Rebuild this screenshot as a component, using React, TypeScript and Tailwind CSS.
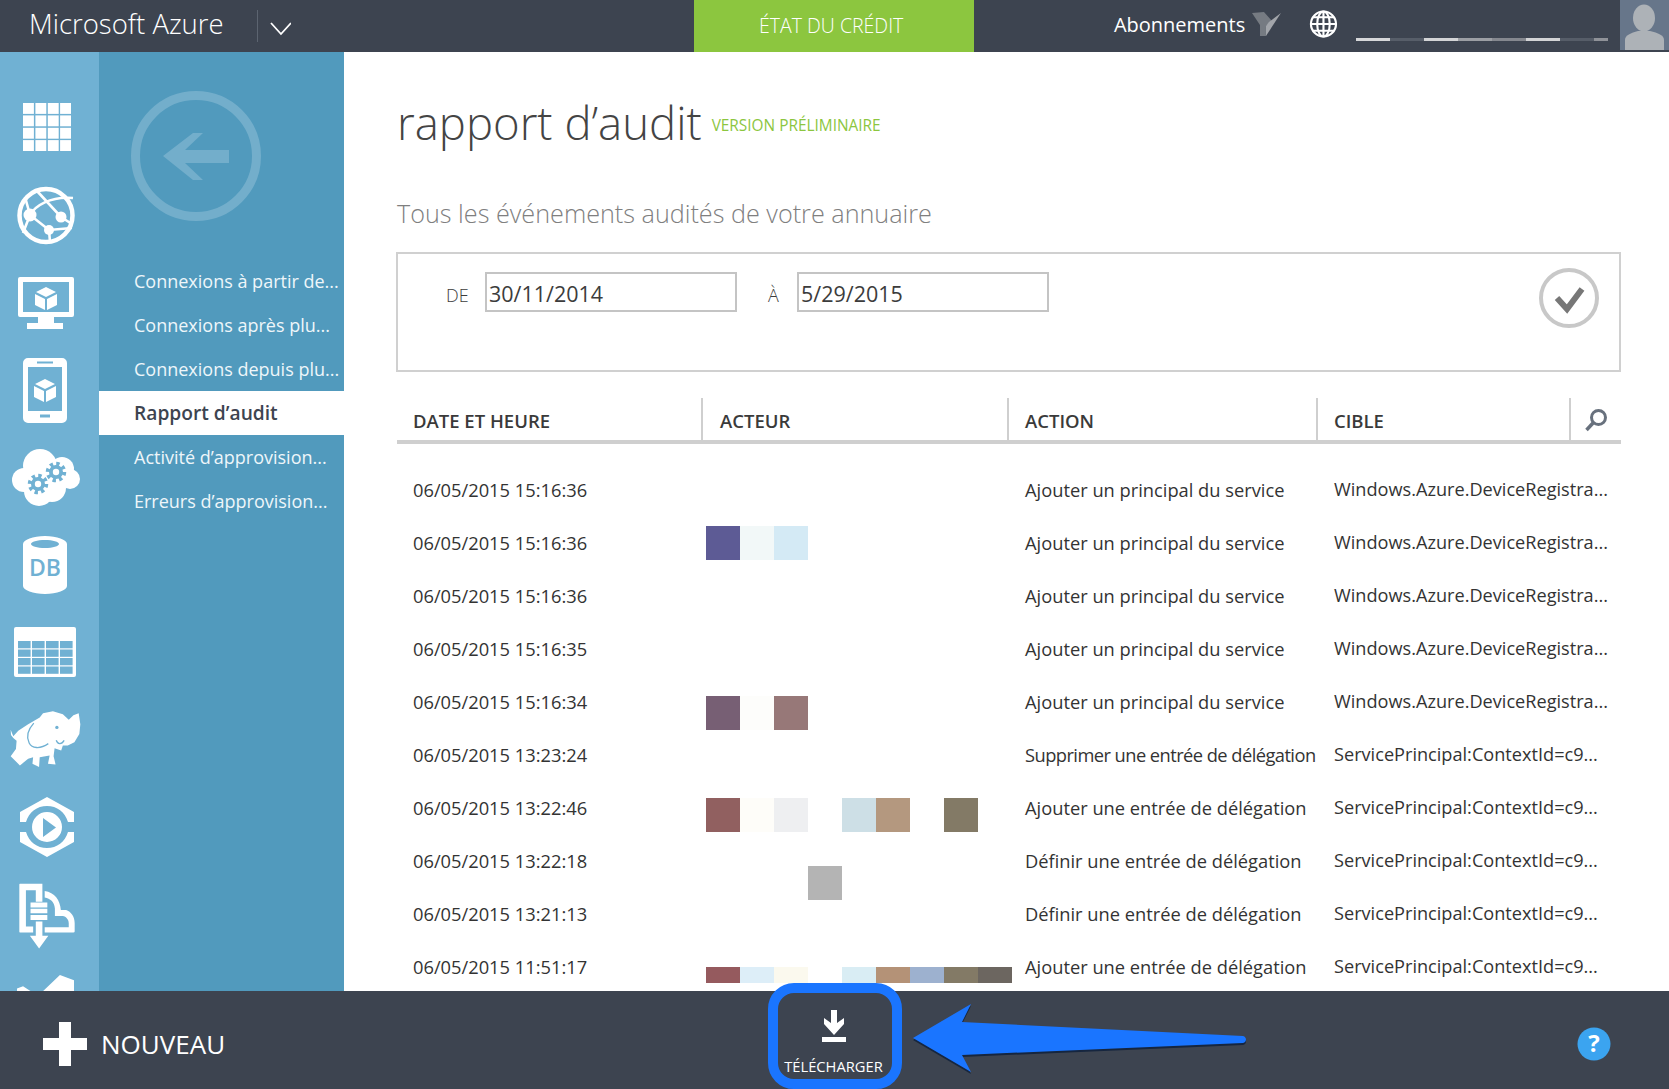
const font = 'font-["Open_Sans","Noto_Sans",sans-serif]';

const menu = [
  'Connexions à partir de...',
  'Connexions après plu...',
  'Connexions depuis plu...',
  'Rapport d’audit',
  'Activité d’approvision...',
  'Erreurs d’approvision...',
];

const addSp = 'Ajouter un principal du service';
const winAzure = 'Windows.Azure.DeviceRegistra...';
const spCtx = 'ServicePrincipal:ContextId=c9...';

type Row = { date: string; action: string; target: string; actionClass?: string; swatches?: React.ReactNode };

const rows: Row[] = [
  { date: '06/05/2015 15:16:36', action: addSp, target: winAzure },
  {
    date: '06/05/2015 15:16:36',
    action: addSp,
    target: winAzure,
    swatches: (
      <div className="flex h-[34px] mt-[10px] w-[300px]">
        <div className="w-[34px] bg-[#5d5b95]" />
        <div className="w-[34px] bg-[#f2f8f8]" />
        <div className="w-[34px] bg-[#d4eaf5]" />
      </div>
    ),
  },
  { date: '06/05/2015 15:16:36', action: addSp, target: winAzure },
  { date: '06/05/2015 15:16:35', action: addSp, target: winAzure },
  {
    date: '06/05/2015 15:16:34',
    action: addSp,
    target: winAzure,
    swatches: (
      <div className="flex h-[34px] mt-[21px] w-[300px]">
        <div className="w-[34px] bg-[#775f74]" />
        <div className="w-[34px] bg-[#fdfdfb]" />
        <div className="w-[34px] bg-[#977878]" />
      </div>
    ),
  },
  {
    date: '06/05/2015 13:23:24',
    action: 'Supprimer une entrée de délégation',
    target: spCtx,
    actionClass: 'tracking-[-0.55px]',
  },
  {
    date: '06/05/2015 13:22:46',
    action: 'Ajouter une entrée de délégation',
    target: spCtx,
    swatches: (
      <div className="flex h-[34px] mt-[17px] w-[300px]">
        <div className="w-[34px] bg-[#916060]" />
        <div className="w-[34px] bg-[#fefdf9]" />
        <div className="w-[34px] bg-[#eeeff1]" />
        <div className="w-[34px]" />
        <div className="w-[34px] bg-[#cddfe6]" />
        <div className="w-[34px] bg-[#b4987f]" />
        <div className="w-[34px]" />
        <div className="w-[34px] bg-[#837a66]" />
      </div>
    ),
  },
  {
    date: '06/05/2015 13:22:18',
    action: 'Définir une entrée de délégation',
    target: spCtx,
    swatches: (
      <div className="flex h-[34px] mt-[32px] w-[300px]">
        <div className="w-[102px]" />
        <div className="w-[34px] bg-[#b4b4b4]" />
      </div>
    ),
  },
  { date: '06/05/2015 13:21:13', action: 'Définir une entrée de délégation', target: spCtx },
  {
    date: '06/05/2015 11:51:17',
    action: 'Ajouter une entrée de délégation',
    target: spCtx,
    swatches: (
      <div className="flex h-[16px] mt-[27px] w-[306px]">
        <div className="w-[34px] bg-[#955a5e]" />
        <div className="w-[34px] bg-[#ddeef8]" />
        <div className="w-[34px] bg-[#fbf9ee]" />
        <div className="w-[34px]" />
        <div className="w-[34px] bg-[#d9edf4]" />
        <div className="w-[34px] bg-[#b49277]" />
        <div className="w-[34px] bg-[#9db1cf]" />
        <div className="w-[34px] bg-[#837a66]" />
        <div className="w-[34px] bg-[#6c6660]" />
      </div>
    ),
  },
];

function Gear({ cx, cy }: { cx: number; cy: number }) {
  return (
    <>
      <circle cx={cx} cy={cy} r="8" fill="none" stroke="#70b1d3" strokeWidth="4.500" strokeDasharray="3.200 3.080" />
      <circle cx={cx} cy={cy} r="7" fill="#70b1d3" />
      <circle cx={cx} cy={cy} r="3.200" fill="#fff" />
    </>
  );
}

function RailIcons() {
  const gridPos = [0, 12.4, 24.8, 37.1];
  const tableX = [4, 18, 32, 46];
  const tableY = [14, 22.5, 31, 39.5];
  return (
    <div className="flex flex-col text-white">
      <svg className="ml-[23px] mt-[51px] w-[48px] h-[48px]" viewBox="0 0 48 48" fill="currentColor">
        {gridPos.map((y) =>
          gridPos.map((x) => <rect key={`${x}-${y}`} x={x} y={y} width="10.9" height="10.9" />),
        )}
      </svg>
      <svg className="ml-[16px] mt-[35px] w-[60px] h-[59px]" viewBox="0 0 60 59" fill="none" stroke="currentColor">
        <circle cx="30" cy="29.5" r="26.500" strokeWidth="4.500" />
        <path d="M14 29C19 20 34 10 57 12M21 5L45 31 56 38M14 29L33 44 56 42M9 11L14 29 7 47M33 44L34 56" strokeWidth="2.600" />
        <circle cx="14" cy="29" r="6.500" fill="currentColor" stroke="none" />
        <circle cx="45" cy="31" r="5.500" fill="currentColor" stroke="none" />
        <circle cx="33" cy="44" r="5" fill="currentColor" stroke="none" />
      </svg>
      <svg className="ml-[18px] mt-[32px] w-[56px] h-[53px]" viewBox="0 0 56 53" fill="currentColor">
        <path fillRule="evenodd" d="M2 0h52a2 2 0 0 1 2 2v36a2 2 0 0 1-2 2H36v6h9v6H9v-6h11v-6H2a2 2 0 0 1-2-2V2a2 2 0 0 1 2-2zm3 5v30h46V5z" />
        <path d="M28 10l10 5-10 5-10-5zM17 17l10 5v11l-10-5zM39 17v11l-10 5V22z" />
      </svg>
      <svg className="ml-[23px] mt-[28px] w-[44px] h-[65px]" viewBox="0 0 44 65" fill="currentColor">
        <path fillRule="evenodd" d="M5 0h34a5 5 0 0 1 5 5v55a5 5 0 0 1-5 5H5a5 5 0 0 1-5-5V5a5 5 0 0 1 5-5zm0 9v44h34V9zM14 3.500v2h16v-2zM17 56.500v3h10v-3z" />
        <path d="M22 21l10 5-10 5-10-5zM11 28l10 5v11l-10-5zM33 28v11l-10 5V33z" />
      </svg>
      <svg className="ml-[12px] mt-[26px] w-[68px] h-[57px]" viewBox="0 0 68 57" fill="#fff">
        <circle cx="12" cy="31" r="12" />
        <circle cx="28" cy="17" r="17" />
        <circle cx="50" cy="20" r="12" />
        <circle cx="58" cy="30" r="10" />
        <circle cx="40" cy="39" r="14" />
        <circle cx="27" cy="42" r="15" />
        <Gear cx={44} cy={23} />
        <Gear cx={26} cy={35} />
      </svg>
      <div className="relative ml-[23px] mt-[30px] w-[44px] h-[58px] overflow-hidden">
        <svg className="w-[44px] h-[58px]" viewBox="0 0 44 58" fill="currentColor">
          <path fillRule="evenodd" d="M0 8c0-4 10-8 22-8s22 4 22 8v42c0 4-10 8-22 8S0 54 0 50zm8 0c0 2 6 4 14 4s14-2 14-4-6-4-14-4S8 6 8 8z" />
        </svg>
        <span className="absolute left-[6px] top-[18px] text-[23px] leading-[26px] font-semibold text-[#70b1d3] font-['Open_Sans',sans-serif]">DB</span>
      </div>
      <svg className="ml-[14px] mt-[33px] w-[62px] h-[50px]" viewBox="0 0 62 50">
        <rect width="62" height="50" rx="2" fill="#fff" />
        {tableY.map((y) =>
          tableX.map((x) => <rect key={`${x}-${y}`} x={x} y={y} width="12.600" height="7.300" fill="#70b1d3" />),
        )}
      </svg>
      <svg className="ml-[10px] mt-[34px] w-[71px] h-[57px]" viewBox="30 36 215 171" fill="#fff">
        <path d="M32 92L40 112 55 95 85 75 120 55 130 42 160 36 190 45 208 62 222 48 238 42 243 75 240 105 225 130 205 140 190 140 185 155 165 148 162 172 168 197 145 195 150 170 120 175 118 205 98 195 100 175 85 180 60 200 45 185 32 172 48 150 50 125 40 117 33 108z" />
        <path d="M102 72C84 92 78 112 88 132 96 148 120 152 146 134M170 124C174 136 186 138 194 124" fill="none" stroke="#70b1d3" strokeWidth="4" />
        <circle cx="172" cy="85" r="5" fill="#70b1d3" />
      </svg>
      <svg className="ml-[20px] mt-[29px] w-[54px] h-[60px]" viewBox="0 0 54 60" fill="currentColor">
        <path d="M27 0L54 15V25H48C45 15 37 9 27 9S9 15 6 25H0V15ZM0 35H6C9 45 17 51 27 51S45 45 48 35H54V45L27 60 0 45Z" />
        <path fillRule="evenodd" d="M27 15a15 15 0 1 1 0 30 15 15 0 0 1 0-30zm-4 6v19l13-9.500z" />
      </svg>
      <svg className="ml-[19px] mt-[26px] w-[56px] h-[66px]" viewBox="57 38 170 200" fill="currentColor">
        <path d="M60 40H128V95H108V60H78V170H100V188H60Q58 188 58 186V42Q58 40 60 40Z" />
        <path d="M135 62C165 66 182 90 184 120H200C215 125 226 140 226 160V185Q226 188 222 188H135V172H208V160C208 148 200 140 190 138H166V115C164 95 152 85 135 82Z" />
        <path d="M92 97H143V112H92zM92 116H143V130H92zM92 135H143V150H92z" />
        <path d="M108 155H128V198H146L118 237 90 198H108z" />
      </svg>
      <svg className="ml-[17px] mt-[26px] w-[57px] h-[16px] shrink-0" viewBox="52 315 170 47" fill="currentColor">
        <path d="M52 362V355L70 348 92 362ZM130 362L180 315 222 330V362Z" />
      </svg>
    </div>
  );
}

function BackCircle() {
  return (
    <svg className="ml-[32px] mt-[39px] w-[130px] h-[130px]" viewBox="0 0 130 130" fill="#73aecb">
      <circle cx="65" cy="65" r="60.500" fill="none" stroke="#73aecb" strokeWidth="9" />
      <path d="M32 65L62 42H72L54 59H98V72H54L72 89H62Z" />
    </svg>
  );
}

export default function App() {
  return (
    <div className={`relative w-[1669px] h-[1089px] overflow-hidden flex flex-col bg-white text-[#3c3c3c] ${font}`}>
      <header className="h-[52px] shrink-0 bg-[#3d4450] flex items-start text-white">
        <span className="ml-[29px] mt-[2px] text-[27.5px] leading-[44px] font-light w-[228px] whitespace-nowrap">Microsoft Azure</span>
        <div className="mt-[10px] w-px h-[32px] bg-[#5c6470]" />
        <svg className="ml-[12px] mt-[22px] w-[22px] h-[14px]" viewBox="0 0 22 14" fill="none" stroke="currentColor" strokeWidth="1.800">
          <path d="M1 1l10 11L21 1" />
        </svg>
        <div className="ml-[403px] w-[280px] h-[52px] bg-[#8cc63f] flex items-center justify-center pr-[6px] text-[19.5px] font-light">
          ÉTAT DU CRÉDIT
        </div>
        <span className="ml-[140px] mt-[6px] text-[20px] leading-[38px]">Abonnements</span>
        <svg className="ml-[7px] mt-[12px] w-[30px] h-[26px]" viewBox="0 0 30 26">
          <path d="M0 1L12 0 20 9 14 14V24H8V13Z" fill="#767b82" />
          <path d="M17 10L29 1 14 24V14Z" fill="#a3a6ab" />
        </svg>
        <svg className="ml-[27px] mt-[9px] w-[29px] h-[30px]" viewBox="0 0 30 30" fill="none" stroke="currentColor" strokeWidth="2.200">
          <circle cx="15" cy="15" r="13" />
          <ellipse cx="15" cy="15" rx="6.500" ry="13" />
          <path d="M15 2v26M2 15h26M4 8h22M4 22h22" />
        </svg>
        <div className="ml-[18px] mt-[38px] flex h-[3px]">
          <div className="w-[34px] bg-[#d6d7d9]" />
          <div className="w-[34px] bg-[#575e69]" />
          <div className="w-[34px] bg-[#d3d4d6]" />
          <div className="w-[34px] bg-[#9c9fa4]" />
          <div className="w-[34px] bg-[#85888f]" />
          <div className="w-[34px] bg-[#d3d4d6]" />
          <div className="w-[34px] bg-[#565d68]" />
          <div className="w-[14px] bg-[#8f9298]" />
        </div>
        <div className="ml-[12px] w-[49px] h-[50px] bg-[#67768a] overflow-hidden">
          <svg className="w-[49px] h-[50px]" viewBox="0 0 49 50" fill="#adb2b7">
            <ellipse cx="24" cy="18" rx="11" ry="13.500" />
            <path d="M5 50V40c0-5 6-7 13-9h12c8 2 14 4 14 9v10z" />
          </svg>
        </div>
      </header>

      <div className="flex flex-1 min-h-0">
        <nav className="w-[99px] shrink-0 bg-[#70b1d3] overflow-hidden">
          <RailIcons />
        </nav>
        <aside className="w-[245px] shrink-0 bg-[#519abd]">
          <BackCircle />
          <ul className="mt-[38px] text-white">
            {menu.map((m, i) => (
              <li
                key={m}
                className={
                  i === 3
                    ? 'h-[44px] pl-[35px] text-[19.2px] leading-[44px] bg-white text-[#3d4450] font-semibold'
                    : 'h-[44px] pl-[35px] text-[18px] leading-[44px] whitespace-nowrap overflow-hidden font-normal text-[#eef6fa]'
                }
              >
                {m}
              </li>
            ))}
          </ul>
        </aside>
        <main className="flex-1 min-w-0 pl-[53px] pr-[48px] overflow-hidden">
          <div className="flex items-center mt-[34px] h-[72px]">
            <h1 className="text-[45.500px] leading-[72px] font-light text-[#444] whitespace-nowrap">rapport d’audit</h1>
            <span className="ml-[10px] mt-[8px] text-[15.400px] text-[#8cc63f]">VERSION PRÉLIMINAIRE</span>
          </div>
          <p className="mt-[37px] text-[25.200px] leading-[36px] font-light text-[#7f7f7f]">
            Tous les événements audités de votre annuaire
          </p>
          <div className="mt-[21px] h-[120px] border-2 border-[#d0d0d0] flex items-start relative -ml-px">
            <span className="ml-[48px] mt-[27px] w-[39px] text-[18px] leading-[28px] font-light">DE</span>
            <div className="mt-[18px] w-[252px] h-[40px] border-2 border-[#c4c4c4] pl-[2px] pt-[2px] text-[21.500px] leading-[36px]">30/11/2014</div>
            <span className="ml-[31px] mt-[27px] w-[29px] text-[18px] leading-[28px] font-light">À</span>
            <div className="mt-[18px] w-[252px] h-[40px] border-2 border-[#c4c4c4] pl-[2px] pt-[2px] text-[21.500px] leading-[36px]">5/29/2015</div>
            <svg className="ml-auto mr-[20px] mt-[14px] w-[60px] h-[60px]" viewBox="0 0 60 60" fill="none">
              <circle cx="30" cy="30" r="28" stroke="#c8c8c8" strokeWidth="4" />
              <path d="M18 30l10 11 15-20" stroke="#777" strokeWidth="6" />
            </svg>
          </div>
          <div className="mt-[26px] flex h-[46px] border-b-4 border-[#cfcfcf] text-[18.5px] leading-[46px] font-semibold text-[#3a3a3a]">
            <div className="w-[306px] pl-[16px] border-r-2 border-[#cfcfcf]">DATE ET HEURE</div>
            <div className="w-[306px] pl-[17px] border-r-2 border-[#cfcfcf]">ACTEUR</div>
            <div className="w-[309px] pl-[16px] border-r-2 border-[#cfcfcf]">ACTION</div>
            <div className="w-[253px] pl-[16px] border-r-2 border-[#cfcfcf]">CIBLE</div>
            <div className="flex-1 flex items-center justify-center pt-[2px]">
              <svg className="w-[24px] h-[24px]" viewBox="0 0 24 24" fill="none" stroke="#68717d">
                <circle cx="14.500" cy="9.500" r="7" strokeWidth="3" />
                <path d="M9.500 14.500L2.500 22" strokeWidth="3.500" />
              </svg>
            </div>
          </div>
          <div className="mt-[19px] text-[#333]">
            {rows.map((r, i) => (
              <div key={i} className="flex h-[53px] leading-[53px] whitespace-nowrap">
                <div className="w-[306px] pl-[16px] text-[18.3px]">{r.date}</div>
                <div className="w-[305px] pl-[3px] leading-none">{r.swatches}</div>
                <div className={`w-[308px] pl-[17px] text-[18.3px] ${r.actionClass ?? ''}`}>{r.action}</div>
                <div className="pl-[18px] text-[18.150px]">{r.target}</div>
              </div>
            ))}
          </div>
        </main>
      </div>

      <footer className="h-[98px] shrink-0 bg-[#3d4450] flex items-center pt-[8px] text-white relative">
        <svg className="ml-[43px] w-[44px] h-[44px]" viewBox="0 0 44 44" fill="currentColor">
          <path d="M16 0h12v16h16v12H28v16H16V28H0V16h16z" />
        </svg>
        <span className="ml-[14px] text-[26px]">NOUVEAU</span>
        <svg className="ml-auto mr-[58px] w-[34px] h-[34px]" viewBox="0 0 34 34">
          <circle cx="17" cy="17" r="16.500" fill="#3ba4f0" />
          <text x="17" y="25" textAnchor="middle" fontSize="24" fontWeight="700" fill="#fff">?</text>
        </svg>
      </footer>

      {/* annotation drawn on top of the screenshot */}
      <div className="absolute left-[768px] top-[983px] w-[134px] h-[106px] rounded-[26px] border-[10px] border-[#1a75ff] flex flex-col items-center pr-[3px] text-white bg-[#3d4450]">
        <svg className="mt-[17px] w-[26px] h-[32px]" viewBox="0 0 26 32" fill="currentColor">
          <path d="M10 0h6v13l7-5v6L13 25 3 14V8l7 5zM1 27h24v5H1z" />
        </svg>
        <span className="mt-[14px] text-[14.700px] leading-[20px] whitespace-nowrap">TÉLÉCHARGER</span>
      </div>
      <svg className="absolute left-[908px] top-[1000px] w-[345px] h-[80px]" viewBox="0 0 345 80">
        <path d="M5 38L63 4l-9 18 281 14c4 1 4 6 0 7L54 55l9 17z" fill="#16263f" transform="translate(0 2)" />
        <path d="M5 38L63 4l-9 18 281 14c4 1 4 6 0 7L54 55l9 17z" fill="#1a75ff" />
      </svg>
    </div>
  );
}
